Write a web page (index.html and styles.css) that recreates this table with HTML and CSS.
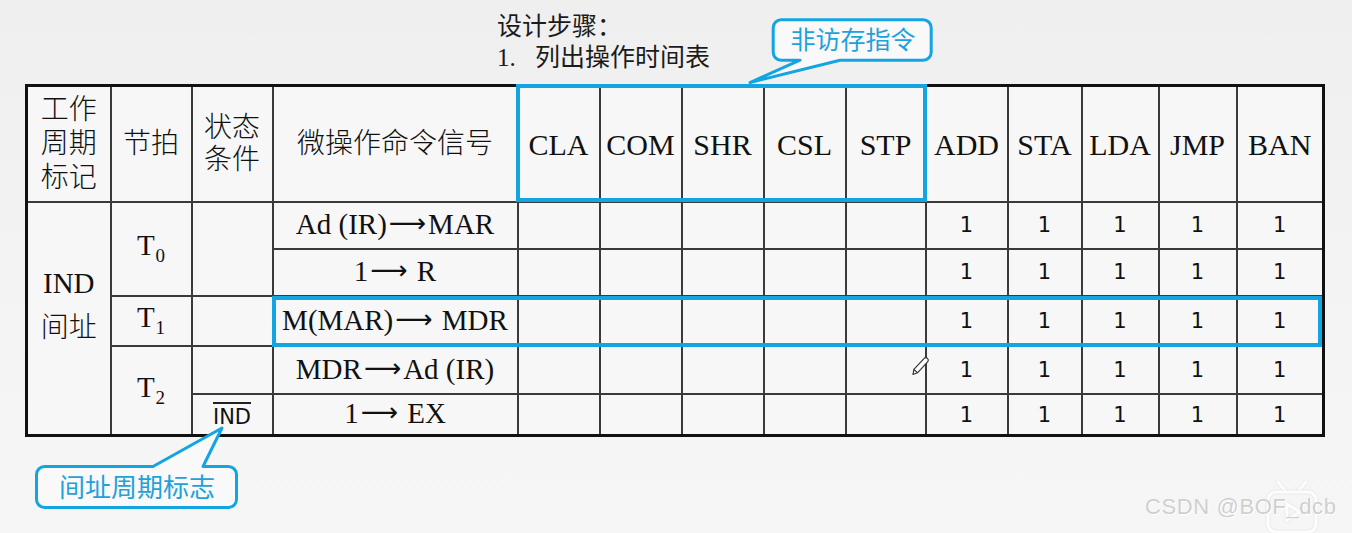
FILE: index.html
```html
<!DOCTYPE html>
<html lang="zh">
<head>
<meta charset="utf-8">
<title>列出操作时间表</title>
<link rel="stylesheet" href="styles.css">
</head>
<body>
<div class="slide">
  <div class="steps">
    <div>设计步骤：</div>
    <div><span class="num">1.</span>列出操作时间表</div>
  </div>
  <table class="tbl">
    <colgroup>
      <col class="c84"><col class="c81"><col class="c81"><col class="c245">
      <col class="c82"><col class="c82"><col class="c82"><col class="c82"><col class="c80">
      <col class="c82"><col class="c74"><col class="c77"><col class="c78"><col class="c87">
    </colgroup>
    <tr class="rh">
      <td class="cjk l3">工作<br>周期<br>标记</td>
      <td class="cjk">节拍</td>
      <td class="cjk l2">状态<br>条件</td>
      <td class="cjk">微操作命令信号</td>
      <td class="hd">CLA</td><td class="hd">COM</td><td class="hd">SHR</td><td class="hd">CSL</td><td class="hd">STP</td>
      <td class="hd">ADD</td><td class="hd">STA</td><td class="hd">LDA</td><td class="hd">JMP</td><td class="hd">BAN</td>
    </tr>
    <tr class="r1">
      <td rowspan="5" class="ind"><div>IND</div><div class="cjk">间址</div></td>
      <td rowspan="2">T<span class="sub">0</span></td>
      <td rowspan="2"></td>
      <td>Ad (IR)<span class="arr">⟶</span>MAR</td>
      <td></td><td></td><td></td><td></td><td></td>
      <td class="n">1</td><td class="n">1</td><td class="n">1</td><td class="n">1</td><td class="n">1</td>
    </tr>
    <tr class="r2">
      <td>1<span class="arr">⟶</span> R</td>
      <td></td><td></td><td></td><td></td><td></td>
      <td class="n">1</td><td class="n">1</td><td class="n">1</td><td class="n">1</td><td class="n">1</td>
    </tr>
    <tr class="r3">
      <td>T<span class="sub">1</span></td>
      <td></td>
      <td class="mm">M(MAR)<span class="arr">⟶</span> MDR</td>
      <td></td><td></td><td></td><td></td><td></td>
      <td class="n">1</td><td class="n">1</td><td class="n">1</td><td class="n">1</td><td class="n">1</td>
    </tr>
    <tr class="r4">
      <td rowspan="2">T<span class="sub">2</span></td>
      <td></td>
      <td>MDR<span class="arr">⟶</span>Ad (IR)</td>
      <td></td><td></td><td></td><td></td><td></td>
      <td class="n">1</td><td class="n">1</td><td class="n">1</td><td class="n">1</td><td class="n">1</td>
    </tr>
    <tr class="r5">
      <td class="ov"><span class="bar">IND</span></td>
      <td class="ex">1<span class="arr">⟶</span> EX</td>
      <td></td><td></td><td></td><td></td><td></td>
      <td class="n">1</td><td class="n">1</td><td class="n">1</td><td class="n">1</td><td class="n">1</td>
    </tr>
  </table>

  <div class="hl hl-head"></div>
  <div class="hl hl-row"></div>

  <div class="callout co1">
    <svg class="bubble" width="200" height="80" viewBox="0 0 200 80">
      <path d="M41.2 9.8 H183.2 A8 8 0 0 1 191.2 17.8 V42.2 A8 8 0 0 1 183.2 50.2 H100 L10 72.5 L60 50.2 H41.2 A8 8 0 0 1 33.2 42.2 V17.8 A8 8 0 0 1 41.2 9.8 Z"/>
    </svg>
    <span class="ctext">非访存指令</span>
  </div>

  <div class="callout co2">
    <svg class="bubble" width="225" height="100" viewBox="0 0 225 100">
      <path d="M19.5 46.5 H128 L197 8 L178 46.5 H203.5 A8 8 0 0 1 211.5 54.5 V79.5 A8 8 0 0 1 203.5 87.5 H19.5 A8 8 0 0 1 11.5 79.5 V54.5 A8 8 0 0 1 19.5 46.5 Z"/>
    </svg>
    <span class="ctext">间址周期标志</span>
  </div>

  <svg class="pencil" width="20" height="22" viewBox="0 0 20 22">
    <path d="M2 19.5 L2.9 14.4 L13.2 3.3 A2.5 2.5 0 0 1 16.8 6.7 L6.5 17.8 Z" />
    <path class="pl" d="M2.9 14.4 L6.5 17.8" />
  </svg>

  <svg class="tv" width="60" height="60" viewBox="0 0 60 60">
    <path d="M16 6 L24 16 M44 6 L36 16" />
    <rect x="6" y="16" width="48" height="40" rx="8" />
    <path d="M25 28 L38 36 L25 44 Z" />
  </svg>
  <div class="wm">CSDN @BOF_dcb</div>
</div>
</body>
</html>
```
FILE: styles.css
```css
* { box-sizing: border-box; }
html, body { margin: 0; padding: 0; }
body { background: #f3f3f3; }

.slide {
  position: relative;
  width: 1352px;
  height: 533px;
  overflow: hidden;
  background: linear-gradient(180deg, #efefef 0%, #f3f3f3 50%, #f6f6f6 100%);
}

.steps {
  height: 84px;
  padding: 11px 0 0 497px;
  font-family: "Liberation Serif", "Noto Sans CJK SC", serif;
  font-size: 25px;
  line-height: 31px;
  color: #1b1b1b;
}
.num { display: inline-block; width: 38px; }

.tbl {
  margin-left: 25px;
  border-collapse: collapse;
  table-layout: fixed;
  width: 1300px;
  border: 3px solid #111;
  background: #f7f7f7;
}
.c84 { width: 84px; }
.c81 { width: 81px; }
.c245 { width: 245px; }
.c82 { width: 82px; }
.c80 { width: 80px; }
.c74 { width: 74px; }
.c77 { width: 77px; }
.c78 { width: 78px; }
.c87 { width: 87px; }

.tbl td {
  border: 2px solid #3a3a3a;
  padding: 0;
  text-align: center;
  vertical-align: middle;
  font-family: "Liberation Serif", "Noto Sans CJK SC", serif;
  font-size: 29px;
  line-height: 1.1;
  color: #111;
  white-space: nowrap;
}
.rh { height: 116px; }
.r1 { height: 47px; }
.r2 { height: 47px; }
.r3 { height: 50px; }
.r4 { height: 48px; }
.r5 { height: 42px; }

.tbl td.cjk { font-size: 28px; line-height: 34px; font-weight: 300; }
.tbl td.l2 { line-height: 32px; }
.tbl td.hd { padding-top: 2px; font-size: 30px; }
.cjk { font-family: "Noto Sans CJK SC", sans-serif; font-weight: 300; }

.tbl td.ind { padding-bottom: 28px; line-height: 42px; }
.ind .cjk { font-size: 28px; }

.sub { font-size: 19px; vertical-align: -7px; margin-left: 1px; }

.arr {
  font-family: "DejaVu Sans", sans-serif;
  font-size: 26px;
  margin: 0 2px;
  vertical-align: 2px;
}

.tbl td.n {
  font-family: "DejaVu Sans", sans-serif;
  font-size: 21px;
  padding-top: 2px;
}

.tbl td.ov { font-family: "DejaVu Sans", sans-serif; font-size: 21px; padding-top: 2px; }
.bar { border-top: 2px solid #222; padding-top: 3px; display: inline-block; line-height: 20px; }

/* highlight boxes over the table */
.hl { position: absolute; border: 4px solid #13a4e2; }
.hl-head { left: 516px; top: 84px; width: 411px; height: 118px; }
.hl-row { left: 272px; top: 296px; width: 1050px; height: 51px; }

/* callouts */
.callout { position: absolute; }
.co1 { left: 740px; top: 10px; width: 200px; height: 80px; }
.co2 { left: 25px; top: 420px; width: 225px; height: 100px; }
.bubble { position: absolute; left: 0; top: 0; }
.bubble path { fill: #f9f9f9; stroke: #13a4e2; stroke-width: 3; stroke-linejoin: round; }
.ctext {
  position: absolute;
  display: flex;
  align-items: center;
  justify-content: center;
  font-family: "Noto Sans CJK SC", sans-serif;
  color: #1ea2dc;
  white-space: nowrap;
}
.co1 .ctext { left: 33px; top: 8px; width: 160px; height: 40px; font-size: 25px; }
.co2 .ctext { left: 11px; top: 45px; width: 202px; height: 40px; font-size: 26px; }

.pencil { position: absolute; left: 911px; top: 355px; }
.pencil path { fill: #fff; stroke: #333; stroke-width: 1.2; stroke-linejoin: round; }
.pencil .pl { fill: none; }

.tv { position: absolute; left: 1262px; top: 476px; opacity: 0.85; }
.tv path, .tv rect { fill: none; stroke: #ffffff; stroke-width: 3; stroke-linecap: round; filter: drop-shadow(0 0 1px rgba(0,0,0,0.12)); }

.wm {
  position: absolute;
  left: 1145px;
  top: 494px;
  font-family: "Liberation Sans", sans-serif;
  font-size: 22px;
  letter-spacing: 0.6px;
  color: #cfcfcf;
  text-shadow: 0 0 1px #fff, 1px 1px 0 #fff;
  white-space: nowrap;
}
```
